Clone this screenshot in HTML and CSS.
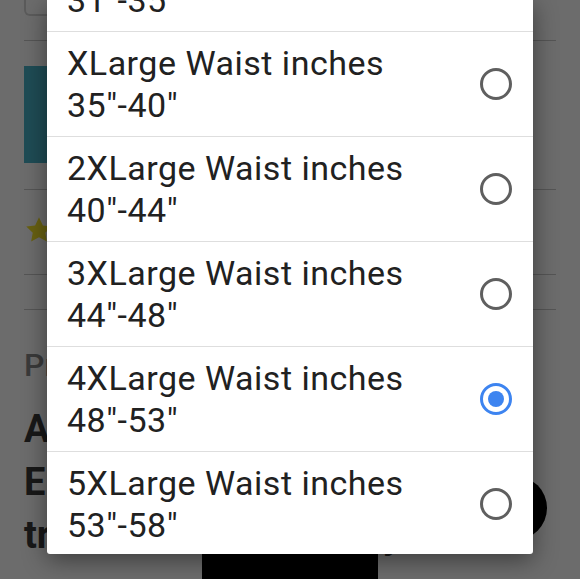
FILE: index.html
```html
<!DOCTYPE html>
<html lang="en">
<head>
<meta charset="utf-8">
<title>Select size</title>
<link rel="stylesheet" href="styles.css">
</head>
<body>
<div class="screen">
  <main class="page">
    <section class="sec sec-top">
      <div class="field"></div>
    </section>
    <section class="sec sec-media">
      <div class="media"></div>
    </section>
    <section class="sec sec-rating">
      <svg class="star" viewBox="0 0 24 24" width="30" height="30"><path d="M12 1.8l3.1 6.5 7.1.9-5.2 4.9 1.3 7.1L12 17.7l-6.3 3.5 1.3-7.1-5.2-4.9 7.1-.9z"/></svg>
    </section>
    <section class="sec sec-spacer"></section>
    <section class="details">
      <h2 class="details-label">Product Details</h2>
      <h1 class="details-title">Adjustable Waist Belt<br>Elastic Stretch Band for<br>trousers and everyday</h1>
    </section>
  </main>
  <div class="fab"></div>
  <div class="buy-btn"></div>
  <div class="scrim"></div>
  <div class="dialog" role="radiogroup">
    <div class="options">
      <div class="option"><span class="label">Large Waist inches<br>31"-35"</span><span class="radio"></span></div>
      <div class="option"><span class="label">XLarge Waist inches<br>35"-40"</span><span class="radio"></span></div>
      <div class="option"><span class="label">2XLarge Waist inches<br>40"-44"</span><span class="radio"></span></div>
      <div class="option"><span class="label">3XLarge Waist inches<br>44"-48"</span><span class="radio"></span></div>
      <div class="option"><span class="label">4XLarge Waist inches<br>48"-53"</span><span class="radio checked"></span></div>
      <div class="option"><span class="label">5XLarge Waist inches<br>53"-58"</span><span class="radio"></span></div>
    </div>
  </div>
</div>
</body>
</html>
```
FILE: styles.css
```css
* { box-sizing: border-box; margin: 0; padding: 0; }

html, body {
  width: 580px;
  height: 579px;
  overflow: hidden;
  background: #fff;
  font-family: Roboto, "Noto Sans", sans-serif;
}

.screen {
  position: relative;
  width: 580px;
  height: 579px;
  overflow: hidden;
}

.page {
  padding: 0 24px;
}

.sec {
  border-bottom: 1px solid #c8c8c8;
}

.sec-top {
  height: 41px;
}

.field {
  width: 300px;
  height: 16px;
  border: 2px solid #d8d8d8;
  border-top: none;
  border-radius: 0 0 6px 6px;
}

.sec-media {
  padding: 25px 0;
  height: 149px;
}

.media {
  width: 220px;
  height: 97px;
  background: #49b3c8;
}

.sec-rating {
  height: 85px;
  display: flex;
  align-items: center;
}

.star {
  fill: #f6e42a;
  width: 30px;
  height: 30px;
  margin-left: 0;
  margin-top: -4px;
}

.sec-spacer {
  height: 35px;
}

.details-label {
  margin-top: 35px;
  font-size: 32px;
  line-height: 40px;
  font-weight: 500;
  color: #8a8a8a;
}

.details-title {
  margin-top: 18px;
  font-size: 38px;
  line-height: 53px;
  font-weight: 700;
  color: #3a3a3a;
}

.fab {
  position: absolute;
  left: 483px;
  top: 476px;
  width: 64px;
  height: 64px;
  border-radius: 50%;
  background: #000;
}

.buy-btn {
  position: absolute;
  left: 202px;
  top: 548px;
  width: 176px;
  height: 40px;
  background: #000;
}

.scrim {
  position: absolute;
  inset: 0;
  background: rgba(0, 0, 0, 0.575);
}

.dialog {
  position: absolute;
  left: 47px;
  top: 0;
  width: 486px;
  height: 554px;
  background: #fff;
  border-radius: 0 0 3px 3px;
  overflow: hidden;
  box-shadow: 0 6px 24px rgba(0, 0, 0, 0.45);
}

.options {
  margin-top: -74px;
}

.option {
  height: 105px;
  display: flex;
  align-items: center;
  justify-content: space-between;
  padding: 0 21px 0 20px;
  border-top: 1px solid #dedede;
}

.option:first-child {
  border-top: none;
}

.label {
  font-size: 34px;
  line-height: 42px;
  color: #212121;
  letter-spacing: 0.5px;
}

.radio {
  flex: none;
  width: 32px;
  height: 32px;
  border: 3px solid #5f5f5f;
  border-radius: 50%;
  display: flex;
  align-items: center;
  justify-content: center;
}

.radio.checked {
  border-color: #3d84f0;
}

.radio.checked::after {
  content: "";
  width: 16px;
  height: 16px;
  border-radius: 50%;
  background: #3d84f0;
}
```
